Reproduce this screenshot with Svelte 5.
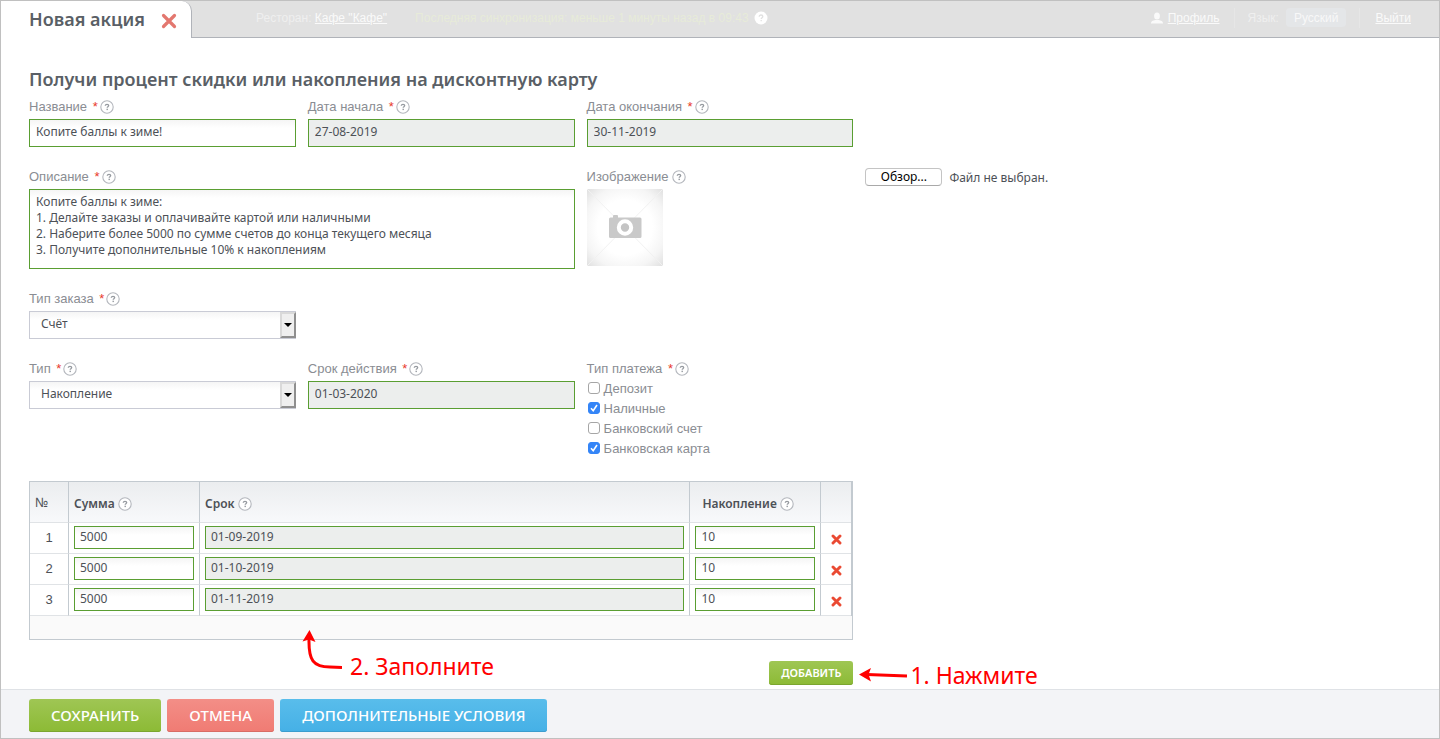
<script lang="ts">
  let name = "Копите баллы к зиме!";
  let startDate = "27-08-2019";
  let endDate = "30-11-2019";
  let description =
    "Копите баллы к зиме:\n1. Делайте заказы и оплачивайте картой или наличными\n2. Наберите более 5000 по сумме счетов до конца текущего месяца\n3. Получите дополнительные 10% к накоплениям";
  let orderType = "Счёт";
  let type = "Накопление";
  let validUntil = "01-03-2020";
  let fileInput: HTMLInputElement;

  let payments = [
    { label: "Депозит", checked: false },
    { label: "Наличные", checked: true },
    { label: "Банковский счет", checked: false },
    { label: "Банковская карта", checked: true },
  ];

  let rows = [
    { sum: "5000", date: "01-09-2019", percent: "10" },
    { sum: "5000", date: "01-10-2019", percent: "10" },
    { sum: "5000", date: "01-11-2019", percent: "10" },
  ];

  function addRow() {
    rows = [...rows, { sum: "", date: "", percent: "" }];
  }

  function removeRow(index: number) {
    rows = rows.filter((_, i) => i !== index);
  }
</script>

{#snippet help()}
  <svg class="help" width="14" height="14" viewBox="0 0 14 14" aria-hidden="true">
    <circle cx="7" cy="7" r="6.2" fill="#fff" stroke="#b4b7bd" stroke-width="1.1" />
    <path d="M5.3 5.8c0-1 .8-1.500 1.700-1.500s1.700.500 1.700 1.300c0 1.100-1.500 1.100-1.500 2.200" fill="none" stroke="#95999f" stroke-width="1.3" />
    <rect x="6.5" y="8.700" width="1.4" height="1.4" fill="#95999f" />
  </svg>
{/snippet}

{#snippet star()}<span class="star">*</span>{/snippet}

<div class="page">
  <header class="topbar">
    <div class="tab">
      <h1>Новая акция</h1>
      <button class="close" type="button" aria-label="Закрыть">
        <svg width="16" height="16" viewBox="0 0 16 16">
          <path d="M2.500 2.500l11 11M13.500 2.500L2.500 13.500" stroke="#e3776f" stroke-width="3.2" stroke-linecap="round" />
        </svg>
      </button>
    </div>
    <div class="info">
      <span class="restaurant">Ресторан: <a href="#cafe">Кафе "Кафе"</a></span>
      <span class="sync">Последняя синхронизация: меньше 1 минуты назад в 09:43</span>
      <svg class="sync-help" width="14" height="14" viewBox="0 0 14 14" aria-hidden="true">
        <circle cx="7" cy="7" r="6.5" fill="#fff" />
        <path d="M5.2 5.7c0-1.1.8-1.7 1.8-1.7s1.8.6 1.8 1.5c0 1.2-1.6 1.2-1.6 2.5M7.2 9v1.3" fill="none" stroke="#e1e1e1" stroke-width="1.3" />
      </svg>
      <nav>
        <svg width="12" height="12" viewBox="0 0 12 12" aria-hidden="true">
          <ellipse cx="6" cy="4" rx="2.9" ry="3.6" fill="#fafafa" />
          <path d="M0 11.500c0-2.600 2-3 4.300-3.600h3.400C10 8.500 12 8.900 12 11.500z" fill="#fafafa" />
        </svg>
        <a class="profile" href="#profile">Профиль</a>
        <span class="lang">Язык:</span>
        <button class="lang-button" type="button">Русский</button>
        <a class="exit" href="#exit">Выйти</a>
      </nav>
    </div>
  </header>

  <main>
    <h2>Получи процент скидки или накопления на дисконтную карту</h2>

    <div class="row">
      <div class="field">
        <label for="name">Название {@render star()}{@render help()}</label>
        <input id="name" type="text" bind:value={name} />
      </div>
      <div class="field">
        <label for="start">Дата начала {@render star()}{@render help()}</label>
        <input id="start" type="text" readonly value={startDate} />
      </div>
      <div class="field">
        <label for="end">Дата окончания {@render star()}{@render help()}</label>
        <input id="end" type="text" readonly value={endDate} />
      </div>
    </div>

    <div class="row">
      <div class="field wide">
        <label for="description">Описание {@render star()}{@render help()}</label>
        <textarea id="description" bind:value={description}></textarea>
      </div>
      <div class="field">
        <label for="image">Изображение {@render help()}</label>
        <svg class="placeholder" width="76" height="77" viewBox="0 0 76 77" aria-hidden="true">
          <defs>
            <radialGradient id="shade" r="0.72">
              <stop offset="0.5" stop-color="#fff" />
              <stop offset="0.75" stop-color="#f5f5f5" />
              <stop offset="1" stop-color="#dedede" />
            </radialGradient>
          </defs>
          <rect width="76" height="77" fill="url(#shade)" />
          <path d="M0 0l76 77M76 0L0 77" stroke="#f1f1f1" />
          <path d="M22 30q0-1.500 1.500-1.500h2.500v-1.500q0-1 1-1h3q1 0 1 1v1.500h22q1.500 0 1.500 1.500v17.500q0 1.500-1.500 1.500h-29.500q-1.500 0-1.500-1.500z" fill="#c9c9c9" />
          <circle cx="38" cy="38.500" r="6.200" fill="#c4c4c4" stroke="#fff" stroke-width="4" />
        </svg>
      </div>
      <div class="file">
        <button type="button" on:click={() => fileInput.click()}>Обзор...</button>
        <span>Файл не выбран.</span>
        <input id="image" type="file" hidden bind:this={fileInput} />
      </div>
    </div>

    <div class="row">
      <div class="field">
        <label for="order-type">Тип заказа {@render star()}{@render help()}</label>
        <div class="select">
          <select id="order-type" bind:value={orderType}>
            <option>Счёт</option>
          </select>
          <span class="arrow"></span>
        </div>
      </div>
    </div>

    <div class="row">
      <div class="field">
        <label for="type">Тип {@render star()}{@render help()}</label>
        <div class="select">
          <select id="type" bind:value={type}>
            <option>Накопление</option>
          </select>
          <span class="arrow"></span>
        </div>
      </div>
      <div class="field">
        <label for="valid">Срок действия {@render star()}{@render help()}</label>
        <input id="valid" type="text" readonly value={validUntil} />
      </div>
      <fieldset>
        <legend>Тип платежа {@render star()}{@render help()}</legend>
        {#each payments as payment}
          <label class="check">
            <input type="checkbox" bind:checked={payment.checked} />
            {payment.label}
          </label>
        {/each}
      </fieldset>
    </div>

    <div class="row">
      <div class="grid">
        <table>
          <thead>
            <tr>
              <th class="num">№</th>
              <th class="short">Сумма {@render help()}</th>
              <th>Срок {@render help()}</th>
              <th class="short percent">Накопление {@render help()}</th>
              <th class="del"></th>
            </tr>
          </thead>
          <tbody>
            {#each rows as row, i}
              <tr>
                <td class="num">{i + 1}</td>
                <td><input type="text" aria-label="Сумма" bind:value={row.sum} /></td>
                <td><input type="text" aria-label="Срок" readonly value={row.date} /></td>
                <td><input type="text" aria-label="Накопление" bind:value={row.percent} /></td>
                <td class="del">
                  <button type="button" aria-label="Удалить" on:click={() => removeRow(i)}>
                    <svg width="11" height="11" viewBox="0 0 11 11">
                      <path d="M2 2l7 7M9 2L2 9" stroke="#ea4a33" stroke-width="2.900" stroke-linecap="round" />
                    </svg>
                  </button>
                </td>
              </tr>
            {/each}
          </tbody>
        </table>
        <div class="grid-footer"></div>
        <div class="add">
          <button class="btn green small" type="button" on:click={addRow}>ДОБАВИТЬ</button>
        </div>

        <div class="note fill">
          <svg width="42" height="42" viewBox="0 0 42 42" aria-hidden="true">
            <path d="M9 9C8.500 30 13 37 30 37L42 37.500" fill="none" stroke="#f00" stroke-width="3" />
            <path d="M9.500 0L15.500 12L9 9.500L2.500 11.500z" fill="#f00" />
          </svg>
          <span>2. Заполните</span>
        </div>
        <div class="note press">
          <svg width="48" height="14" viewBox="0 0 48 14" aria-hidden="true">
            <path d="M8 6.500L48 8" fill="none" stroke="#f00" stroke-width="3" />
            <path d="M0 6.500L12 0L9.500 6.500L12 13.500z" fill="#f00" />
          </svg>
          <span>1. Нажмите</span>
        </div>
      </div>
    </div>
  </main>

  <footer>
    <button class="btn green" type="button">СОХРАНИТЬ</button>
    <button class="btn red" type="button">ОТМЕНА</button>
    <button class="btn blue" type="button">ДОПОЛНИТЕЛЬНЫЕ УСЛОВИЯ</button>
  </footer>
</div>

<style>
  :global(body) {
    margin: 0;
    background: #fff;
  }

  .page {
    display: flex;
    flex-direction: column;
    min-height: 100vh;
    box-sizing: border-box;
    border: 1px solid #c0c0c0;
    font-family: "Liberation Sans", Arial, sans-serif;
    font-size: 13px;
    color: #8a8d93;
  }

  button,
  input,
  select,
  textarea {
    font-family: "Noto Sans", "Open Sans", sans-serif;
    box-sizing: border-box;
    margin: 0;
  }

  button {
    cursor: pointer;
  }

  a {
    color: inherit;
  }

  .topbar {
    display: flex;
    height: 37px;
    background: #e1e1e1;
  }

  .tab {
    display: flex;
    align-items: center;
    gap: 16px;
    box-sizing: border-box;
    width: 191px;
    padding: 0 14px 2px 28px;
    background: #fff;
    border-right: 1px solid #b0b3b9;
    border-top-right-radius: 10px;
  }

  h1,
  h2 {
    margin: 0;
    font-family: "Noto Sans", "Open Sans", sans-serif;
    font-size: 18px;
    font-weight: 600;
    color: #5a5f66;
    white-space: nowrap;
  }

  .close {
    display: flex;
    padding: 5px 0 0;
    border: 0;
    background: none;
  }

  .info {
    flex: 1;
    display: flex;
    align-items: center;
    padding: 0 28px 3px 64px;
    border-bottom: 1px solid #b0b3b9;
    font-size: 12px;
    color: #efefef;
    white-space: nowrap;
  }

  .restaurant {
    margin-right: 28px;
  }

  .restaurant a,
  .profile,
  .exit {
    color: #fafafa;
  }

  .sync {
    color: #e7ebd9;
  }

  .sync-help {
    margin-left: 5px;
  }

  nav {
    display: flex;
    align-items: center;
    margin-left: auto;
  }

  .profile {
    margin: 0 14px 0 5px;
  }

  .lang {
    padding-left: 13px;
    border-left: 1px solid #e6e6e6;
    line-height: 20px;
  }

  .lang-button {
    height: 19px;
    margin: 0 13px 0 7px;
    padding: 0 8px;
    border: 0;
    border-radius: 4px;
    background: #e4e6e8;
    font-family: inherit;
    font-size: 12px;
    color: #f8f8f8;
  }

  .exit {
    padding-left: 15px;
    border-left: 1px solid #e6e6e6;
    line-height: 20px;
  }

  main {
    flex: 1;
    padding: 28px 28px 2px;
  }

  h2 {
    line-height: 26px;
    margin-bottom: 5px;
  }

  .row {
    display: grid;
    grid-template-columns: repeat(5, 1fr);
    column-gap: 12px;
    margin-bottom: 20px;
  }

  .row:last-child {
    margin-bottom: 0;
  }

  .field {
    display: flex;
    flex-direction: column;
    min-width: 0;
  }

  .wide {
    grid-column: span 2;
  }

  .field > label,
  legend {
    height: 20px;
    line-height: 20px;
    margin-bottom: 2px;
    padding: 0;
    white-space: nowrap;
  }

  .star {
    color: #e8392b;
    margin: 0 2px;
  }

  .help {
    vertical-align: -3px;
  }

  input[type="text"],
  textarea,
  select {
    width: 100%;
    height: 28px;
    padding: 0 6px 3px;
    border: 1px solid #5a9e32;
    border-radius: 0;
    background: linear-gradient(#f5f5f5, #fff 8px);
    font-size: 12px;
    color: #4d5157;
  }

  input[type="text"][readonly] {
    background: #eceeed;
  }

  textarea {
    display: block;
    height: 80px;
    padding: 4px 6px;
    line-height: 16px;
    resize: none;
  }

  .placeholder {
    display: block;
  }

  .file {
    display: flex;
    align-items: center;
    gap: 7px;
    height: 20px;
    font-family: "Noto Sans", "Open Sans", sans-serif;
    font-size: 12px;
    color: #4d5157;
  }

  .file button {
    width: 77px;
    height: 18px;
    padding: 0;
    border: 1px solid #c4c4c4;
    border-bottom-color: #a9a9a9;
    border-radius: 4px;
    background: #fff;
    font-size: 12px;
    line-height: 14px;
    color: #000;
  }

  .select {
    position: relative;
  }

  select {
    display: block;
    appearance: none;
    padding: 0 20px 3px 11px;
    border-color: #c9cbd5;
  }

  .arrow {
    position: absolute;
    top: 1px;
    right: 0;
    bottom: 1px;
    display: flex;
    align-items: center;
    justify-content: center;
    box-sizing: border-box;
    width: 16px;
    border: 2px solid;
    border-color: #d9d9d9 #8f8f8f #8f8f8f #d9d9d9;
    background: #efefef;
    pointer-events: none;
  }

  .arrow::after {
    content: "";
    border: 4px solid transparent;
    border-top-color: #000;
    border-bottom: 0;
  }

  fieldset {
    min-width: 0;
    margin: 0;
    padding: 0;
    border: 0;
  }

  legend {
    height: 19px;
    margin-bottom: 0;
  }

  .check {
    display: flex;
    align-items: center;
    gap: 4px;
    height: 20px;
  }

  .check input {
    appearance: none;
    width: 12px;
    height: 12px;
    margin-left: 1px;
    border: 1px solid #a6a6a6;
    border-radius: 3px;
    background: #fff;
  }

  .check input:checked {
    border-color: #3485f7;
    background: #3485f7
      url("data:image/svg+xml,%3Csvg xmlns='http://www.w3.org/2000/svg' viewBox='0 0 10 10'%3E%3Cpath d='M2 5.300l2.200 2.400L8 2' fill='none' stroke='white' stroke-width='1.600'/%3E%3C/svg%3E");
  }

  .grid {
    position: relative;
    grid-column: span 3;
    margin-top: 3px;
    color: #4d5157;
  }

  table {
    width: 100%;
    table-layout: fixed;
    border-collapse: separate;
    border-spacing: 0;
    border: 1px solid #c3cad0;
    border-width: 1px 2px 0 1px;
  }

  th,
  td {
    box-sizing: border-box;
    padding: 0 5px;
    border-right: 1px solid #c3cad0;
    border-bottom: 1px solid #e0e3e6;
    text-align: left;
  }

  th:last-child,
  td:last-child {
    border-right: 0;
  }

  th {
    height: 41px;
    padding-top: 3px;
    background: linear-gradient(#ebedef, #f8f9fb);
    font-family: "Noto Sans", "Open Sans", sans-serif;
    font-size: 12px;
    font-weight: 600;
    white-space: nowrap;
  }

  td {
    height: 31px;
    padding-bottom: 1px;
  }

  td input[type="text"] {
    display: block;
    height: 23px;
    padding: 0 5px 2px;
  }

  .num {
    width: 39px;
    text-align: center;
  }

  th.num {
    padding-top: 0;
    font-size: 13px;
    font-weight: 400;
    text-align: left;
  }

  .short {
    width: 131px;
  }

  .percent {
    padding-left: 12px;
  }

  .del {
    width: 30px;
    padding: 0;
    text-align: center;
  }

  .del button {
    display: inline-flex;
    padding: 0;
    border: 0;
    background: none;
    vertical-align: middle;
  }

  .grid-footer {
    height: 23px;
    border: 1px solid #c3cad0;
    border-top: 0;
    background: #fafafa;
  }

  .add {
    display: flex;
    justify-content: flex-end;
    margin-top: 21px;
  }

  .btn {
    height: 33px;
    padding: 0 22px 2px;
    border: 0;
    border-radius: 3px;
    font-size: 15px;
    font-weight: 500;
    color: #fff;
    white-space: nowrap;
  }

  .green {
    background: linear-gradient(#9fc654, #8cba35);
    box-shadow: inset 0 -1px #7ba52f;
  }

  .red {
    background: linear-gradient(#f38e87, #f07b73);
    box-shadow: inset 0 -1px #d86c65;
  }

  .blue {
    background: linear-gradient(#59bdeb, #45b0e6);
    box-shadow: inset 0 -1px #3c9dce;
  }

  .small {
    height: 24px;
    padding: 0 12px 1px;
    font-size: 11px;
    font-weight: 600;
  }

  .note {
    position: absolute;
    display: flex;
    font-family: "Noto Sans", "Open Sans", sans-serif;
    font-size: 23px;
    line-height: 28px;
    color: #f00;
    white-space: nowrap;
    pointer-events: none;
  }

  .fill {
    top: 149px;
    left: 271px;
    gap: 8px;
    align-items: flex-end;
  }

  .fill span {
    margin-bottom: -8px;
  }

  .press {
    top: 180px;
    left: 100%;
    margin-left: 6px;
    gap: 3px;
    align-items: center;
  }

  footer {
    display: flex;
    gap: 6px;
    padding: 9px 28px 6px;
    border-top: 1px solid #dfe2e6;
    background: #f3f4f7;
  }
</style>
